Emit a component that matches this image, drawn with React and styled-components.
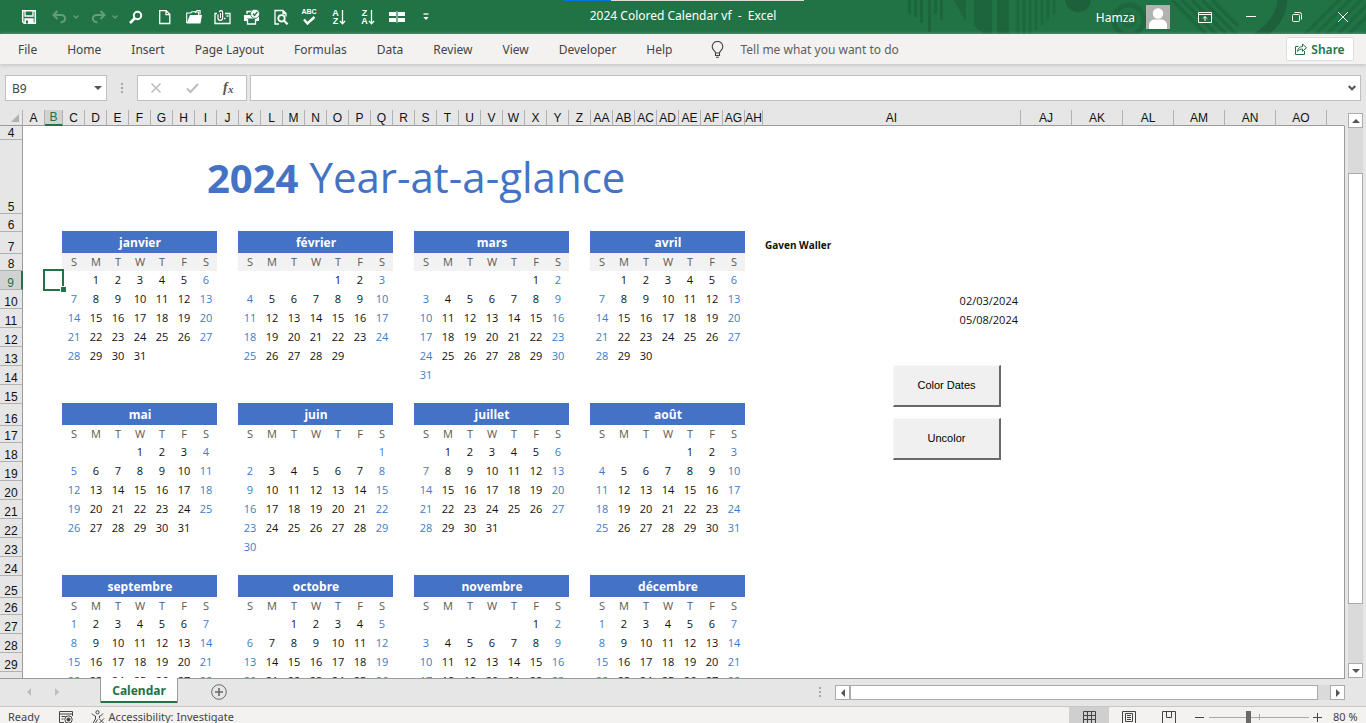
import React from "react";
import styled, { createGlobalStyle, css } from "styled-components";

const ui = `"Noto Sans", "Open Sans", sans-serif`;
const cellFont = `"Open Sans", "Noto Sans", sans-serif`;
const sans = `"Liberation Sans", Arial, sans-serif`;
const green = "#217346";
const blue = "#4472c4";

const Global = createGlobalStyle`
  *, *::before, *::after { box-sizing: border-box; }
  body { margin: 0; background: #e6e6e6; font-family: ${ui}; overflow: hidden; }
  button, input { font: inherit; margin: 0; }
  button { border: 0; padding: 0; background: none; color: inherit; }
`;

const Shell = styled.div`
  display: flex;
  flex-direction: column;
  height: 100vh;
`;

/* ---------- Title bar ---------- */
const TitleBar = styled.header`
  position: relative;
  display: grid;
  grid-template-columns: 1fr auto 1fr;
  align-items: center;
  height: 34px;
  flex: none;
  background: ${green};
  color: #fff;
  font-size: 12px;
  overflow: hidden;
`;
const Pattern = styled.svg`
  position: absolute;
  top: 0;
  right: 0;
  width: 466px;
  height: 34px;
`;
const Progress = styled.div`
  position: absolute;
  top: 0;
  left: 563px;
  width: 241px;
  height: 1px;
  background: linear-gradient(90deg, #0078d7 20%, #dcdcdc 20%);
`;
const QuickAccess = styled.div`
  display: flex;
  align-items: center;
  padding-left: 14px;
`;
const ToolButton = styled.button`
  display: flex;
  align-items: center;
  justify-content: center;
  gap: 6px;
  width: ${(p) => p.$width || 29}px;
  height: 34px;
  opacity: ${(p) => (p.disabled ? 0.3 : 1)};
  color: #fff;
  svg { display: block; }
`;
const DocTitle = styled.h1`
  position: relative;
  margin: 0;
  padding-bottom: 2px;
  font-size: 12px;
  line-height: 32px;
  font-weight: 400;
  white-space: pre;
`;
const Account = styled.div`
  position: relative;
  display: flex;
  align-items: center;
  justify-content: flex-end;
`;
const Avatar = styled.svg`
  margin: 0 11px;
`;

/* ---------- Ribbon ---------- */
const Ribbon = styled.nav`
  position: relative;
  display: flex;
  align-items: center;
  height: 30px;
  flex: none;
  padding: 0 12px 0 3px;
  background: #f3f2f1;
  color: #444;
  font-size: 12px;
  box-shadow: 0 1px 4px #bdbdbd;
`;
const Tab = styled.button`
  padding: 1px 15px 0;
  height: 30px;
  line-height: 29px;
`;
const TellMe = styled.label`
  display: flex;
  align-items: center;
  gap: 16px;
  margin-left: 24px;
  flex: 1;
`;
const TellInput = styled.input`
  width: 240px;
  border: 0;
  padding: 0;
  background: none;
  outline: none;
  color: #444;
  &::placeholder { color: #5e5e5e; opacity: 1; }
`;
const Share = styled.button`
  display: flex;
  align-items: center;
  justify-content: center;
  gap: 4px;
  width: 68px;
  height: 24px;
  border: 1px solid #e1dfdd;
  border-radius: 2px;
  background: #fff;
  color: ${green};
  font-weight: 600;
`;

/* ---------- Formula bar ---------- */
const FormulaBar = styled.div`
  display: flex;
  align-items: stretch;
  flex: none;
  height: 46px;
  padding: 11px 5px 9px;
  font-size: 12px;
`;
const Field = styled.div`
  display: flex;
  align-items: center;
  justify-content: space-between;
  border: 1px solid #c0c0c0;
  background: #fff;
  width: ${(p) => (p.$width ? p.$width + "px" : "auto")};
  flex: ${(p) => (p.$width ? "none" : 1)};
  padding: ${(p) => (p.$flush ? "0" : "0 4px 0 6px")};
  input {
    flex: 1;
    min-width: 0;
    border: 0;
    padding: 0;
    outline: none;
    color: #444;
    background: none;
  }
`;
const Dots = styled.svg`
  flex: none;
  align-self: center;
  margin: 0 ${(p) => p.$gap}px;
`;
const FieldButton = styled.button`
  display: flex;
  justify-content: center;
  width: 36px;
`;
const Spacer = styled.div`
  width: ${(p) => p.$width}px;
  flex: none;
`;

/* ---------- Worksheet ---------- */
const Work = styled.main`
  display: flex;
  flex: 1;
  min-height: 0;
  gap: 3px;
  padding-right: 3px;
`;
const Sheet = styled.div`
  position: relative;
  flex: 1;
  min-width: 0;
  overflow: hidden;
  background: #e6e6e6;
`;
const Grid = styled.table`
  width: 100%;
  table-layout: fixed;
  border-collapse: separate;
  border-spacing: 0;
`;
const ColHead = styled.th`
  height: 16px;
  padding: 0;
  border-bottom: ${(p) => (p.$active ? `2px solid ${green}` : "1px solid #9b9b9b")};
  border-right: 1px solid ${(p) => (p.$last ? "transparent" : "#b1b1b1")};
  background: ${(p) => (p.$active ? "#d2d2d2" : "#e6e6e6")};
  color: ${(p) => (p.$active ? green : "#111")};
  font: 400 12px/14px ${sans};
  vertical-align: bottom;
  white-space: nowrap;
  svg { display: block; margin: 0 3px 3px auto; }
`;
const Row = styled.tr`
  height: ${(p) => p.$height}px;
`;
const RowHead = styled.th`
  padding: 0;
  border-right: ${(p) => (p.$active ? `2px solid ${green}` : "1px solid #9b9b9b")};
  border-bottom: 1px solid #b1b1b1;
  background: ${(p) => (p.$active ? "#d2d2d2" : "#e6e6e6")};
  color: ${(p) => (p.$active ? green : "#111")};
  font: 400 12px/11px ${sans};
  vertical-align: bottom;
`;
const Cell = styled.td`
  position: relative;
  padding: 0 0 2px;
  background: #fff;
  color: #111;
  font: 400 11px/14px ${cellFont};
  text-align: center;
  vertical-align: middle;
  white-space: nowrap;
  ${(p) => p.$edge && css`border-right: 1px solid #9b9b9b;`}
`;
const DayCell = styled(Cell)`
  color: ${(p) => (p.$weekend ? "#3c7dc8" : "#111")};
`;
const shade = (p) => (p.$shaded ? "#f2f2f2" : "#fff");
const WeekdayCell = styled(Cell)`
  background: ${shade};
  box-shadow: -1px 0 ${shade};
  color: #595959;
`;
const MonthCell = styled(Cell)`
  padding: 0;
  border-bottom: 1px solid ${shade};
  background: ${blue};
  background-clip: padding-box;
  box-shadow: -1px -1px ${blue}, 0 -1px ${blue};
  color: #fff;
  font-size: 12px;
  line-height: 18px;
  font-weight: 700;
`;
const TitleCell = styled(Cell)`
  padding: 0 0 0 144px;
  color: ${blue};
  font-size: 42px;
  line-height: 56px;
  text-align: left;
  b { font-size: 40px; font-weight: 700; }
`;
const NameCell = styled(Cell)`
  padding: 0 0 2px 2px;
  font-weight: 700;
  font-size: 10px;
  text-align: left;
  vertical-align: bottom;
`;
const DateCell = styled(Cell)`
  padding: 0 3px 1px 0;
  text-align: right;
  vertical-align: bottom;
`;
const Selection = styled.div`
  position: absolute;
  inset: -2px -1px -1px -2px;
  z-index: 1;
  border: 2px solid ${green};
  &::after {
    content: "";
    position: absolute;
    right: -4px;
    bottom: -3px;
    width: 6px;
    height: 6px;
    border: 1px solid #fff;
    border-width: 1px 0 0 1px;
    background: ${green};
  }
`;
const FormButtons = styled.div`
  position: absolute;
  z-index: 2;
  top: 255px;
  left: 893px;
  display: flex;
  flex-direction: column;
  gap: 11px;
`;
const FormButton = styled.button`
  width: 108px;
  height: 42px;
  padding-bottom: 2px;
  border: solid;
  border-width: 1px 2px 2px 1px;
  border-color: #f8f8f8 #696969 #696969 #f8f8f8;
  background: #f0f0f0;
  color: #000;
  font: 400 11px/14px ${sans};
`;

/* ---------- Scroll bars ---------- */
const VScroll = styled.div`
  display: flex;
  flex-direction: column;
  width: 15px;
  flex: none;
  padding-top: 3px;
`;
const ScrollButton = styled.button`
  display: flex;
  align-items: center;
  justify-content: center;
  width: 15px;
  height: 15px;
  flex: none;
  border: 1px solid #ababab;
  background: #fff;
`;
const Track = styled.div`
  display: flex;
  flex: 1;
  min-width: 0;
  min-height: 0;
  flex-direction: ${(p) => (p.$vertical ? "column" : "row")};
  padding: ${(p) => (p.$vertical ? "45px 0 59px" : "0 12px 0 0")};
  background: #dadada;
`;
const Thumb = styled.div`
  flex: 1;
  border: 1px solid #ababab;
  background: #fff;
`;

/* ---------- Sheet tabs and status bar ---------- */
const TabBar = styled.div`
  display: flex;
  align-items: stretch;
  height: 28px;
  flex: none;
  padding: 0 21px 0 15px;
  position: relative;
  &::before {
    content: "";
    position: absolute;
    top: 0;
    left: 0;
    right: 21px;
    border-top: 1px solid #9b9b9b;
  }
`;
const NavButton = styled.button`
  display: flex;
  align-items: center;
  justify-content: center;
  width: 28px;
`;
const SheetTab = styled.button`
  position: relative;
  width: 78px;
  height: 25px;
  margin-left: 29px;
  border: 1px solid #9b9b9b;
  border-width: 0 1px;
  background: #fff;
  box-shadow: inset 0 -2px ${green};
  color: ${green};
  font-size: 12px;
  font-weight: 700;
`;
const AddSheet = styled.button`
  display: flex;
  align-items: center;
  margin-left: 33px;
`;
const HScroll = styled.div`
  display: flex;
  width: 510px;
  height: 15px;
  margin-top: 7px;
`;
const Grow = styled.div`
  flex: 1;
`;
const StatusClip = styled.footer`
  flex: none;
  height: 17px;
  overflow: hidden;
  border-top: 1px solid #c6c6c6;
  background: #f3f2f1;
`;
const Status = styled.div`
  display: flex;
  align-items: center;
  height: 20px;
  padding: 0 8px;
  color: #444;
  font-size: 11px;
  line-height: 18px;
`;
const StatusButton = styled.button`
  display: flex;
  align-items: center;
  gap: 4px;
  margin-left: ${(p) => p.$gap}px;
`;
const ViewButton = styled.button`
  display: flex;
  align-items: center;
  justify-content: center;
  width: 40px;
  height: 20px;
  background: ${(p) => (p.$active ? "#cfcfcf" : "transparent")};
`;
const ZoomSlider = styled.div`
  position: relative;
  display: flex;
  width: 100px;
  height: 12px;
  margin: 0 4px 0 5px;
  &::before {
    content: "";
    position: absolute;
    left: 50px;
    top: 3px;
    width: 1px;
    height: 6px;
    background: #a6a6a6;
  }
  input {
    position: relative;
    width: 100px;
    height: 12px;
    appearance: none;
    background: linear-gradient(#a6a6a6, #a6a6a6) center / 100% 1px no-repeat;
  }
  input::-webkit-slider-thumb {
    appearance: none;
    width: 5px;
    height: 12px;
    background: #6a6a6a;
  }
`;
const ZoomLabel = styled.span`
  width: 25px;
  margin-left: 11px;
  white-space: nowrap;
`;

/* ---------- Icons ---------- */
const Svg = ({ w = 16, h = 16, children, ...rest }) => (
  <svg width={w} height={h} viewBox={`0 0 ${w} ${h}`} fill="none" stroke="currentColor" strokeWidth="1.3" aria-hidden="true" {...rest}>
    {children}
  </svg>
);
const Caret = () => (
  <Svg w={6} h={4}><path d="M.5.5 3 3 5.500.5" /></Svg>
);
const letters = { fill: "currentColor", stroke: "none", fontFamily: "Liberation Sans, sans-serif", fontWeight: 700 };

const SaveIcon = () => (
  <Svg>
    <path d="M1.700 1.700h12.600v12.600H3.200L1.700 12.800z" strokeWidth="1.500" />
    <path d="M4 2v5h8V2" />
    <path d="M4 14v-4h8v4z" fill="currentColor" /><path d="M6 11.500v3" stroke={green} strokeWidth="2" />
  </Svg>
);
const UndoIcon = () => (
  <Svg w={15} h={14}><path d="M5.500 1 1.500 5l4 4M2 5h7.500a3.600 3.600 0 0 1 0 7.200H8.500" strokeWidth="2" /></Svg>
);
const RedoIcon = () => (
  <Svg w={15} h={14}><path d="m9.500 1 4 4-4 4M13 5H5.500a3.600 3.600 0 0 0 0 7.200h1" strokeWidth="2" /></Svg>
);
const SearchIcon = () => (
  <Svg><circle cx="9.500" cy="6.500" r="3.700" strokeWidth="2" /><path d="M6.800 9.300 2 14" strokeWidth="2.600" /></Svg>
);
const NewIcon = () => (
  <Svg><path d="M2.700 1.700h6.500l3.600 3.600v9.200H2.700z" /><path d="M9 1.700v4h3.800" /></Svg>
);
const OpenIcon = () => (
  <Svg>
    <path d="M.7 14V4h4l1-1.300h3L9.500 3h3v3" strokeWidth="1.100" />
    <path d="M.5 14.500 4 6h12l-1.500 8.500z" fill="currentColor" stroke="none" />
    <path d="m9 4 2-2.500h3v4" strokeWidth="1.200" />
  </Svg>
);
const MailIcon = () => (
  <Svg w={17}>
    <path d="M3 4.500H1v10h15v-10h-5" />
    <path d="M4 5.500V9a2.300 2.300 0 0 0 4.600 0V3.200a1.600 1.600 0 0 0-3.200 0" strokeWidth="1.200" />
    <path d="M6.500 4v5" strokeWidth="1" />
    <path d="M12.500 7h2M10 9.500h1.500" strokeWidth="1.300" />
  </Svg>
);
const PrintIcon = () => (
  <Svg w={17}>
    <path d="M1 6h15v6h-3V9.500H4V12H1z" fill="currentColor" stroke="none" />
    <path d="M4 5V2.500h5M4.500 10v5h8v-5" />
    <circle cx="12" cy="4.800" r="4.500" fill="currentColor" stroke={green} strokeWidth=".8" />
    <path d="m10 4.800 1.500 1.700L14.300 3" stroke={green} />
  </Svg>
);
const PreviewIcon = () => (
  <Svg>
    <path d="M6 15H2V1.500h8l3 3v3M10 1.500v3h3" />
    <circle cx="8.500" cy="9.300" r="3.200" strokeWidth="1.800" />
    <path d="m11 11.800 3.600 3.500" strokeWidth="2.200" />
  </Svg>
);
const SpellIcon = () => (
  <Svg w={17}>
    <text x="8" y="5" fontSize="7" textAnchor="middle" {...letters}>ABC</text>
    <path d="m3 10.500 3.500 4L13.500 8" strokeWidth="2.400" />
  </Svg>
);
const SortIcon = ({ top, bottom }) => (
  <Svg>
    <text x="4.500" y="7" fontSize="9" textAnchor="middle" {...letters}>{top}</text>
    <text x="4.500" y="15" fontSize="9" textAnchor="middle" {...letters}>{bottom}</text>
    <path d="M11.500 1v13.500M9 12l2.500 2.700L14 12" />
  </Svg>
);
const CellsIcon = () => (
  <Svg>
    <path d="M0 3h7v4H0zM9 3h7v4H9zM0 9h7v4H0zM9 9h7v4H9z" fill="currentColor" stroke="none" />
    <path d="M8 2v12" strokeWidth=".8" />
  </Svg>
);
const MoreIcon = () => (
  <Svg w={6} h={8}><path d="M.5 1h5" /><path d="M.3 4h5.400L3 7z" fill="currentColor" stroke="none" /></Svg>
);
const Triangle = ({ dir, color = "#555" }) => {
  const d = { up: "M0 6 4 2l4 4z", down: "M0 2h8L4 6z", left: "M6 0v8L2 4z", right: "M2 0v8l4-4z" }[dir];
  return <Svg w={8} h={8}><path d={d} fill={color} stroke="none" /></Svg>;
};
const DotColumn = ({ gap }) => (
  <Dots $gap={gap} width="2" height="12" viewBox="0 0 2 12" fill="#a6a6a6" aria-hidden="true">
    <path d="M0 1h2v2H0zM0 5h2v2H0zM0 9h2v2H0z" />
  </Dots>
);

const TitlePattern = () => (
  <Pattern viewBox="0 0 466 34" fill="none" stroke="#1c613b" aria-hidden="true">
    <path d="M9.500 0v14M15.500 0v17M21.500 0v23M29.500 0v32M35.500 0v14M41.500 0v20" strokeWidth="3" opacity=".75" />
    <path d="M54 0h12v22zM74 0h18v34h-8L74 26zM97 0h12v34H97z" fill="#1c613b" stroke="none" opacity=".8" />
    <path d="M118 0v34M124 0v34M130 0v34M136 0v30M142 0v25M148 0v20M154 0v14" strokeWidth="2.500" opacity=".65" />
    <circle cx="178" cy="-1" r="13" fill="#1c613b" stroke="none" />
    <circle cx="229" cy="20" r="15" strokeWidth="5" opacity=".7" />
    <circle cx="229" cy="20" r="6" strokeWidth="3" opacity=".5" />
    <path d="m272 0 34 34M282 0l34 34M292 0l34 34M302 0l34 34M312 0l26 26" strokeWidth="3.500" opacity=".65" />
    <path d="M382-4c2 18-10 32-28 44" strokeWidth="10" />
    <path d="m405 34 36-36M416 34l36-36M427 34l36-36M438 34l30-30M449 34l20-20" strokeWidth="3.500" opacity=".55" />
  </Pattern>
);

/* ---------- Data ---------- */
const tools = [
  ["New", NewIcon], ["Open", OpenIcon], ["Email", MailIcon], ["Quick Print", PrintIcon],
  ["Print Preview", PreviewIcon], ["Spelling", SpellIcon],
  ["Sort A to Z", () => <SortIcon top="A" bottom="Z" />],
  ["Sort Z to A", () => <SortIcon top="Z" bottom="A" />],
  ["Freeze Panes", CellsIcon], ["Customize", MoreIcon],
];
const menu = ["File", "Home", "Insert", "Page Layout", "Formulas", "Data", "Review", "View", "Developer", "Help"];

const monthNames = ["janvier", "février", "mars", "avril", "mai", "juin", "juillet", "août", "septembre", "octobre", "novembre", "décembre"];
const months = monthNames.map((name, i) => ({
  name,
  start: new Date(2024, i, 1).getDay(),
  days: new Date(2024, i + 1, 0).getDate(),
}));
const weekdays = ["S", "M", "T", "W", "T", "F", "S"];

const columnName = (i) => (i < 26 ? "" : "A") + String.fromCharCode(65 + (i % 26));
const columns = Array.from({ length: 41 }, (_, i) => columnName(i));
const columnWidth = (i) => {
  if (i === 1 || i === 33) return 18;
  if (i === 34) return 258;
  return i > 34 ? 51 : 22;
};
const topHeights = { 4: 14, 5: 74, 6: 18 };
const blockHeights = [22, 17, 19, 19, 19, 19, 19, 19, 19];
const rowHeight = (n) => topHeights[n] || blockHeights[(n - 7) % 9];
const rows = Array.from({ length: 27 }, (_, i) => i + 4);

const empties = (from, to) =>
  Array.from({ length: Math.max(0, to - from) }, (_, i) => <Cell key={`e${from + i}`} />);

function monthCells(n) {
  const block = Math.floor((n - 7) / 9);
  const line = (n - 7) % 9;
  const shaded = block === 0;
  return months.slice(block * 4, block * 4 + 4).flatMap((m, k) => {
    const gap = k < 3 ? [<Cell key={`g${k}`} />] : [];
    if (line === 0) {
      return [<MonthCell as="th" scope="colgroup" key={m.name} colSpan={7} $shaded={shaded}>{m.name}</MonthCell>, ...gap];
    }
    if (line === 1) {
      return [...weekdays.map((d, j) => <WeekdayCell key={`${k}-${j}`} $shaded={shaded}>{d}</WeekdayCell>), ...gap];
    }
    return [
      ...weekdays.map((_, j) => {
        const day = (line - 2) * 7 + j - m.start + 1;
        const shown = line < 8 && day > 0 && day <= m.days;
        return <DayCell key={`${k}-${j}`} $weekend={j === 0 || j === 6}>{shown ? day : ""}</DayCell>;
      }),
      ...gap,
    ];
  });
}

function SheetRow({ n }) {
  const dates = { 10: "02/03/2024", 11: "05/08/2024" };
  return (
    <Row $height={rowHeight(n)}>
      <RowHead scope="row" $active={n === 9}>{n}</RowHead>
      <Cell />
      <Cell>{n === 9 && <Selection />}</Cell>
      {n === 5 && <TitleCell colSpan={32}><b>2024</b> Year-at-a-glance</TitleCell>}
      {(n === 4 || n === 6) && empties(2, 34)}
      {n >= 7 && monthCells(n)}
      {n >= 7 && <Cell />}
      {n === 7 ? <NameCell>Gaven Waller</NameCell> : dates[n] ? <DateCell>{dates[n]}</DateCell> : <Cell />}
      {empties(35, 41)}
      <Cell $edge />
    </Row>
  );
}

export default function App() {
  return (
    <Shell>
      <Global />
      <TitleBar>
        <TitlePattern />
        <Progress />
        <QuickAccess>
          <ToolButton aria-label="Save"><SaveIcon /></ToolButton>
          <ToolButton aria-label="Undo" disabled $width={44}><UndoIcon /><Caret /></ToolButton>
          <ToolButton aria-label="Redo" disabled $width={34}><RedoIcon /><Caret /></ToolButton>
          <ToolButton aria-label="Search"><SearchIcon /></ToolButton>
          {tools.map(([label, Icon]) => (
            <ToolButton key={label} aria-label={label}><Icon /></ToolButton>
          ))}
        </QuickAccess>
        <DocTitle>2024 Colored Calendar vf  -  Excel</DocTitle>
        <Account>
          <span>Hamza</span>
          <Avatar width="24" height="24" viewBox="0 0 24 24" aria-hidden="true">
            <path d="M0 0h24v24H0z" fill="#b4b2b1" />
            <circle cx="12" cy="8.500" r="5.200" fill="#fff" />
            <path d="M3 24v-4c0-3.500 3-5.500 6-5.500h6c3 0 6 2 6 5.500v4z" fill="#fff" />
          </Avatar>
          <ToolButton $width={47} aria-label="Ribbon Display Options">
            <Svg w={14} h={11} strokeWidth="1">
              <path d="M.5.5h13v10H.5zM.5 2.500h13M7 9V4.500M5 6.500l2-2 2 2" />
            </Svg>
          </ToolButton>
          <ToolButton $width={46} aria-label="Minimize"><Svg w={10} h={2} strokeWidth="1"><path d="M0 .5h10" /></Svg></ToolButton>
          <ToolButton $width={46} aria-label="Restore">
            <Svg w={10} h={10} strokeWidth="1"><rect x=".5" y="2.500" width="7" height="7" rx="1" /><path d="M2.500.5h5a2 2 0 0 1 2 2v5" /></Svg>
          </ToolButton>
          <ToolButton $width={46} aria-label="Close"><Svg w={10} h={10} strokeWidth="1"><path d="m0 0 10 10M10 0 0 10" /></Svg></ToolButton>
        </Account>
      </TitleBar>

      <Ribbon>
        {menu.map((m) => <Tab key={m}>{m}</Tab>)}
        <TellMe>
          <Svg w={13} h={17} strokeWidth="1.100">
            <path d="M4.500 12c0-2-3.300-3-3.300-6.300a5.300 5.300 0 0 1 10.600 0C11.800 9 8.500 10 8.500 12zM4.500 12v2.500h4V12M5 16.300h3" />
          </Svg>
          <TellInput aria-label="Tell me what you want to do" placeholder="Tell me what you want to do" />
        </TellMe>
        <Share>
          <Svg w={12} h={12} strokeWidth="1">
            <path d="M3.500 3.500h-3v8h9V8" /><path d="M2.500 8.500C3 5 5 3.500 7.500 3.500V1l4 3.700-4 3.600V6C5.500 6 4 6.500 2.500 8.500z" />
          </Svg>
          Share
        </Share>
      </Ribbon>

      <FormulaBar>
        <Field $width={102}>
          <input aria-label="Name Box" defaultValue="B9" />
          <Triangle dir="down" />
        </Field>
        <DotColumn gap={14} />
        <Field $width={110} $flush>
          <FieldButton aria-label="Cancel"><Svg w={12} h={12} stroke="#bdbdbd" strokeWidth="1.500"><path d="m1.500 1.500 9 9M10.500 1.500l-9 9" /></Svg></FieldButton>
          <FieldButton aria-label="Enter"><Svg w={13} h={12} stroke="#bdbdbd" strokeWidth="2"><path d="m1 6.500 3.500 3.500L12 2" /></Svg></FieldButton>
          <FieldButton aria-label="Insert Function">
            <Svg w={14} h={16}>
              <text x="2" y="12" fontSize="14" fontStyle="italic" fontFamily="Liberation Serif, serif" fontWeight="700" fill="#555" stroke="none">f</text>
              <text x="7" y="13" fontSize="11" fontStyle="italic" fontFamily="Liberation Serif, serif" fontWeight="700" fill="#555" stroke="none">x</text>
            </Svg>
          </FieldButton>
        </Field>
        <Spacer $width={3} />
        <Field>
          <input aria-label="Formula Bar" />
          <Svg w={8} h={6} stroke="#555" strokeWidth="2"><path d="m.7 1 3.300 3.300L7.300 1" /></Svg>
        </Field>
      </FormulaBar>

      <Work>
        <Sheet>
          <Grid>
            <colgroup>
              <col width="23" />
              {columns.map((c, i) => <col key={c} width={columnWidth(i)} />)}
              <col />
            </colgroup>
            <thead>
              <tr>
                <ColHead aria-label="Select all"><Svg w={8} h={8}><path d="M8 0v8H0z" fill="#b1b1b1" stroke="none" /></Svg></ColHead>
                {columns.map((c) => <ColHead key={c} scope="col" $active={c === "B"}>{c}</ColHead>)}
                <ColHead $last />
              </tr>
            </thead>
            <tbody>{rows.map((n) => <SheetRow key={n} n={n} />)}</tbody>
          </Grid>
          <FormButtons>
            <FormButton>Color Dates</FormButton>
            <FormButton>Uncolor</FormButton>
          </FormButtons>
        </Sheet>
        <VScroll>
          <ScrollButton aria-label="Scroll up"><Triangle dir="up" /></ScrollButton>
          <Track $vertical><Thumb /></Track>
          <ScrollButton aria-label="Scroll down"><Triangle dir="down" /></ScrollButton>
        </VScroll>
      </Work>

      <TabBar>
        <NavButton aria-label="Previous sheet"><Triangle dir="left" color="#bdbdbd" /></NavButton>
        <NavButton aria-label="Next sheet"><Triangle dir="right" color="#bdbdbd" /></NavButton>
        <SheetTab>Calendar</SheetTab>
        <AddSheet aria-label="New sheet">
          <Svg w={16} h={16} stroke="#6a6a6a" strokeWidth="1"><circle cx="8" cy="8" r="7.300" /><path d="M8 4v8M4 8h8" strokeWidth="1.600" /></Svg>
        </AddSheet>
        <Grow />
        <DotColumn gap={14} />
        <HScroll>
          <ScrollButton aria-label="Scroll left"><Triangle dir="left" /></ScrollButton>
          <Track><Thumb /></Track>
          <ScrollButton aria-label="Scroll right"><Triangle dir="right" /></ScrollButton>
        </HScroll>
      </TabBar>

      <StatusClip>
        <Status>
          <span>Ready</span>
          <StatusButton $gap={19} aria-label="Record macro">
            <Svg w={14} h={13} strokeWidth="1"><path d="M5 11.500H.5V.5h13V5M.5 3h13M2.500 5.500h4M2.500 8h2" /><circle cx="9.500" cy="8.500" r="3.700" /><circle cx="9.500" cy="8.500" r="1.600" fill="currentColor" /></Svg>
          </StatusButton>
          <StatusButton $gap={18}>
            <Svg w={14} h={14} strokeWidth="1"><circle cx="6.500" cy="2.300" r="1.600" /><path d="M1 3.500c1 2 2.500 2 3.500 2.500v3L2 13M12 3.500C11 5.500 9.500 5.500 8.500 6v2M4.500 13l2-3.500M8 8.500l5 5M13 8.500l-5 5" /></Svg>
            Accessibility: Investigate
          </StatusButton>
          <Grow />
          <ViewButton $active aria-label="Normal view">
            <Svg w={13} h={13} strokeWidth="1"><path d="M.5.5h12v12H.5zM4.500.5v12M8.500.5v12M.5 4.500h12M.5 8.500h12" /></Svg>
          </ViewButton>
          <ViewButton aria-label="Page layout view">
            <Svg w={14} h={13} strokeWidth="1"><path d="M.5.5h13v12H.5zM3.500 2.500h7v8h-7zM5 4.500h4M5 6.500h4M5 8.500h4" /></Svg>
          </ViewButton>
          <ViewButton aria-label="Page break preview">
            <Svg w={14} h={13} strokeWidth="1"><path d="M.5.5h13v12H.5zM4.500.5v6h5v-6" /></Svg>
          </ViewButton>
          <StatusButton $gap={6} aria-label="Zoom out"><Svg w={9} h={9} strokeWidth="1"><path d="M0 4.500h9" /></Svg></StatusButton>
          <ZoomSlider><input type="range" aria-label="Zoom" min="0" max="100" defaultValue="39" /></ZoomSlider>
          <StatusButton $gap={0} aria-label="Zoom in"><Svg w={9} h={9} strokeWidth="1"><path d="M0 4.500h9M4.500 0v9" /></Svg></StatusButton>
          <ZoomLabel>80 %</ZoomLabel>
        </Status>
      </StatusClip>
    </Shell>
  );
}
